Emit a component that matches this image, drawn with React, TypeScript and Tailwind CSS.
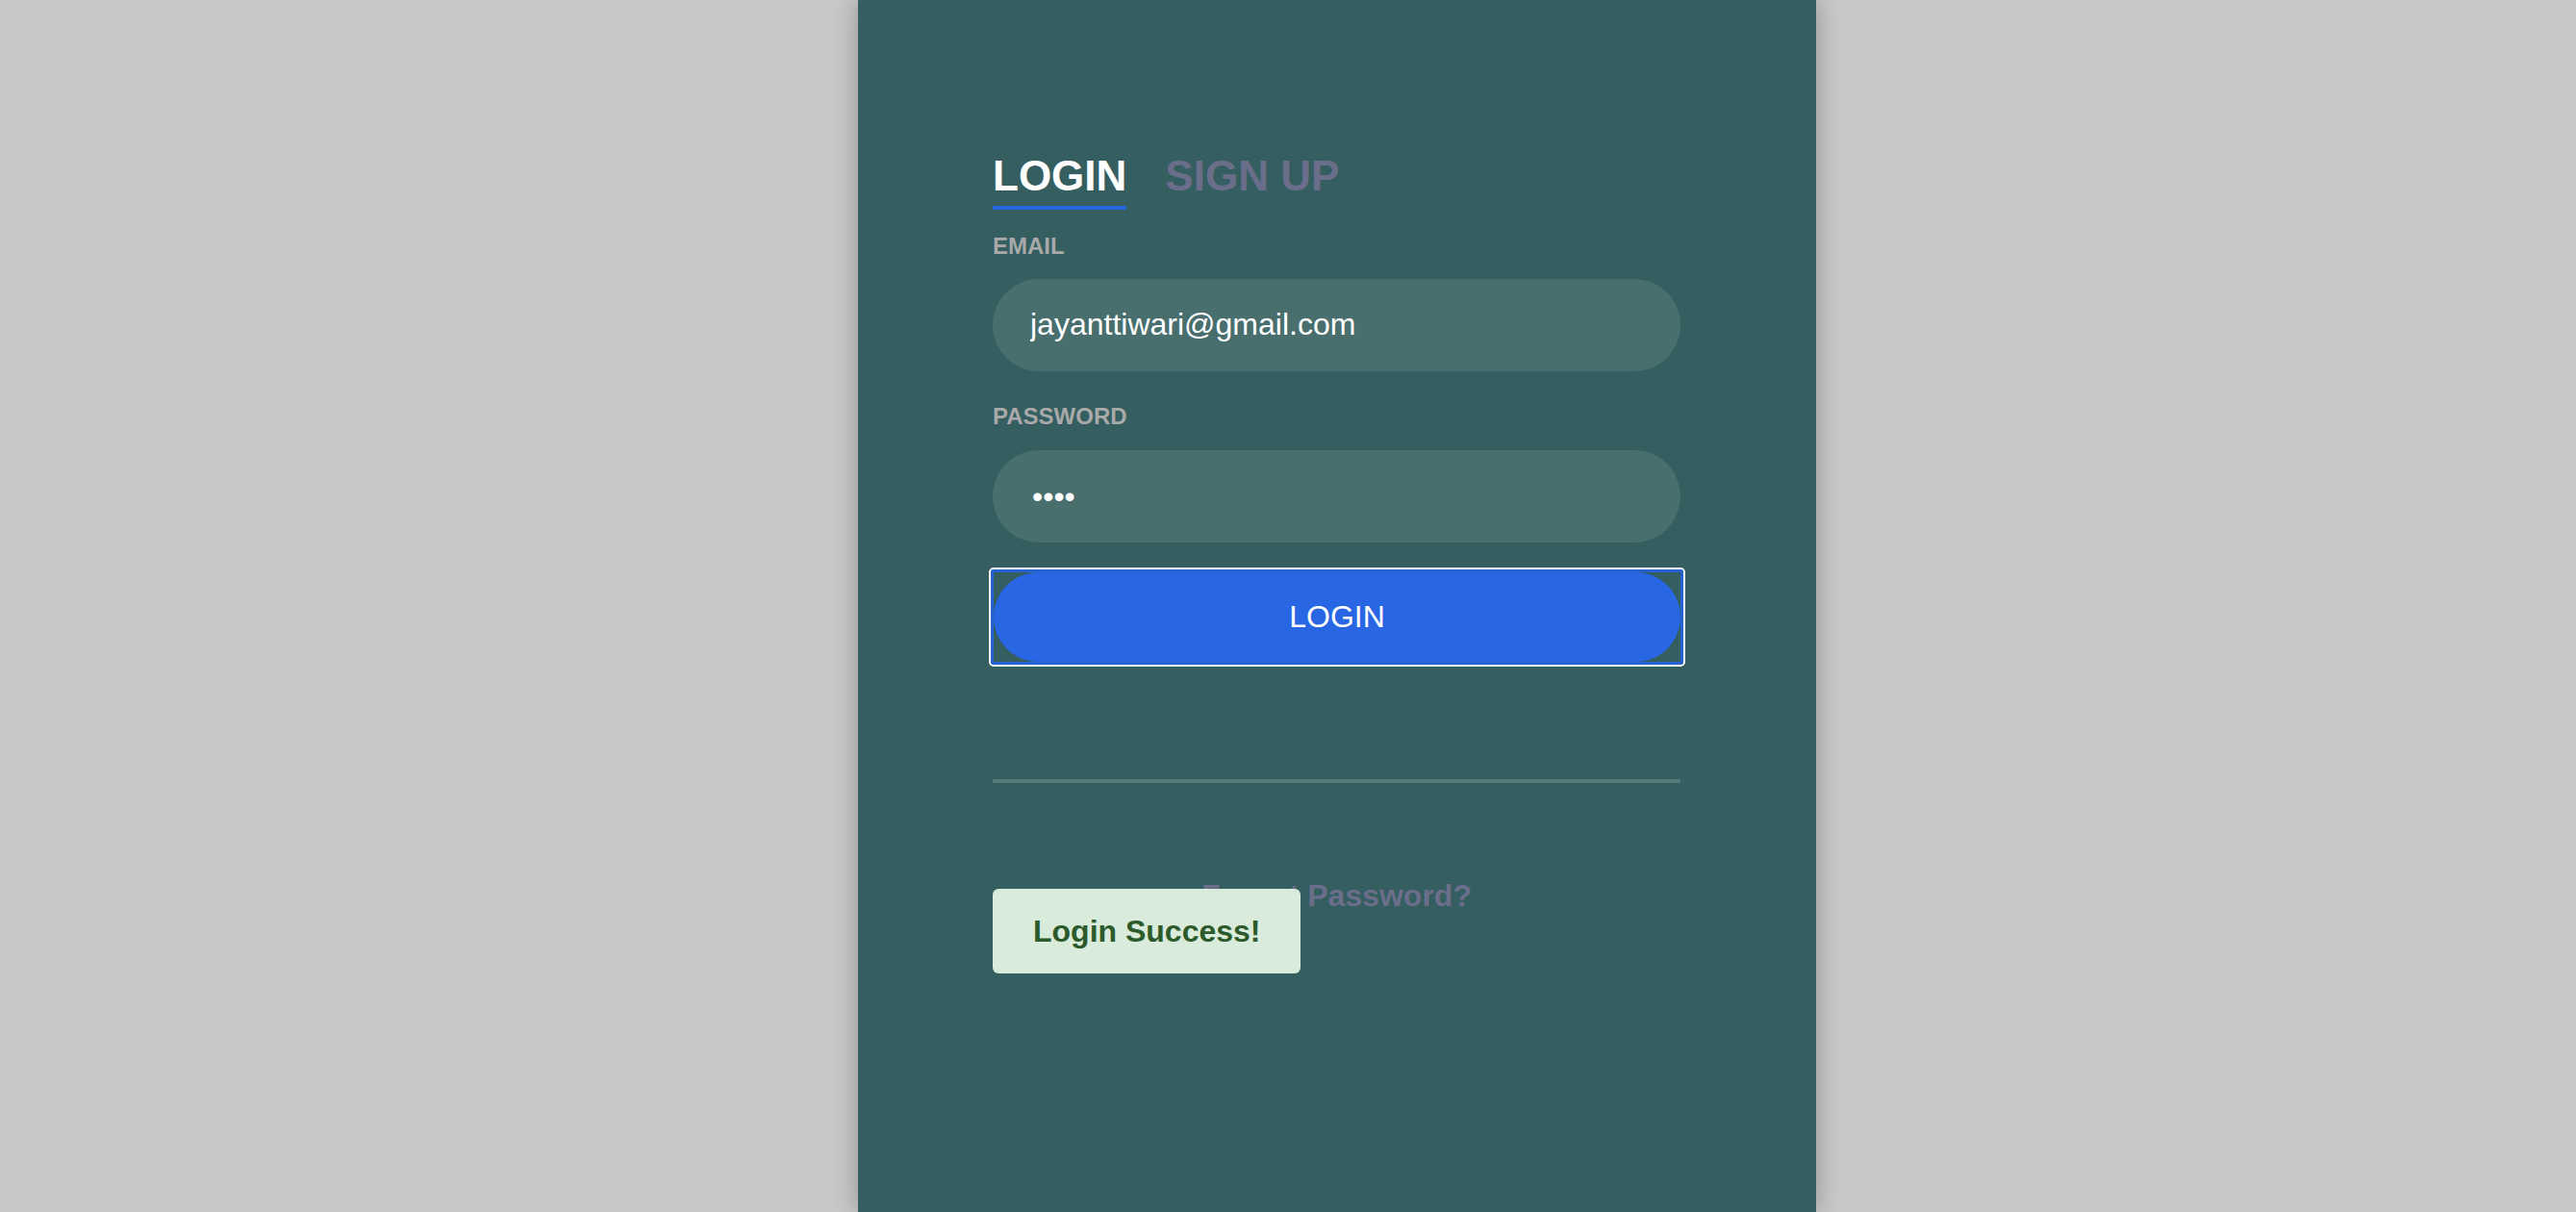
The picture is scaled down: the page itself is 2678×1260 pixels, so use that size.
import React from "react";

export default function App() {
  return (
    <div
      className="w-full h-[1260px] overflow-hidden bg-[#c8c8c8] flex"
      style={{ fontFamily: '"Liberation Sans", Arial, Helvetica, sans-serif' }}
    >
      <div className="relative ml-[892px] w-[996px] h-[1260px] shrink-0 bg-[#345e5f] shadow-[0_0_24px_rgba(0,0,0,0.28)] pl-[140px] pr-[141px] pt-[161px] flex flex-col">
        {/* Tabs */}
        <div className="flex items-start gap-[40px]">
          <div className="flex flex-col">
            <span className="text-[44px] leading-[44px] font-bold text-white">LOGIN</span>
            <div className="mt-[9px] h-[4px] w-full bg-[#2866e3]" />
          </div>
          <span className="text-[44px] leading-[44px] font-bold text-[#6b6e8a]">SIGN UP</span>
        </div>

        {/* Email */}
        <label className="mt-[26px] text-[24px] leading-[24px] font-bold text-[#a9a9a9]">EMAIL</label>
        <input
          type="email"
          defaultValue="jayanttiwari@gmail.com"
          className="mt-[22px] h-[96px] w-full rounded-full bg-[#486f6e] pl-[39px] pr-[39px] pb-[2px] text-[32px] text-white outline-none"
          style={{ fontFamily: '"Liberation Sans", Arial, Helvetica, sans-serif' }}
        />

        {/* Password */}
        <label className="mt-[35px] text-[24px] leading-[24px] font-bold text-[#a9a9a9]">PASSWORD</label>
        <input
          type="password"
          defaultValue="1234"
          className="mt-[23px] h-[96px] w-full rounded-full bg-[#486f6e] pl-[41px] pr-[39px] text-[32px] text-white outline-none"
          style={{ fontFamily: '"Liberation Sans", Arial, Helvetica, sans-serif' }}
        />

        {/* Login button with focus ring */}
        <div className="mt-[26px] -ml-[4px] -mr-[5px] rounded-[5px] border-2 border-white">
          <div className="rounded-[3px] border-[3px] border-[#2762d2]">
            <button className="flex h-[93px] w-full items-center justify-center rounded-full bg-[#2866e3] pb-[2px] text-[32px] text-white">
              LOGIN
            </button>
          </div>
        </div>

        {/* Divider */}
        <div className="mt-[117px] h-[4px] w-full bg-[#56797a]" />

        {/* Forgot password */}
        <div className="mt-[101px] text-center text-[32px] leading-[32px] font-bold text-[#6b6e8a]">
          Forgot Password?
        </div>

        {/* Toast */}
        <div className="absolute left-[140px] top-[924px] flex h-[88px] w-[320px] items-center rounded-[6px] bg-[#d9ebdb] pl-[42px]">
          <span className="text-[32px] font-bold text-[#2c5a2a]">Login Success!</span>
        </div>
      </div>
    </div>
  );
}
